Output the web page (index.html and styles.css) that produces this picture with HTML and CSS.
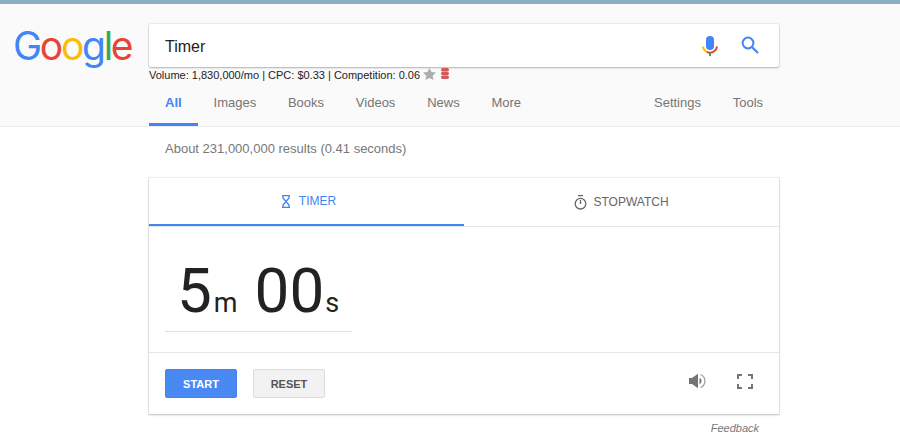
FILE: index.html
```html
<!DOCTYPE html>
<html lang="en">
<head>
<meta charset="utf-8">
<title>Timer - Google Search</title>
<link rel="stylesheet" href="styles.css">
</head>
<body>
<div class="topbar"></div>
<header class="header">
  <div class="logo"><span class="blue">G</span><span class="red">o</span><span class="yellow">o</span><span class="blue">g</span><span class="green">l</span><span class="red">e</span></div>
  <div class="head-main">
    <div class="search">
      <span class="query">Timer</span>
      <svg class="mic" width="16" height="20" viewBox="0 0 16 20">
        <rect x="4" y="0" width="8" height="14" rx="4" fill="#4285f4"/>
        <path d="M1 10.500a7 7 0 0 0 3.800 5.400" fill="none" stroke="#fbbc05" stroke-width="2"/>
        <path d="M4.800 15.900a7 7 0 0 0 6.400 0A7 7 0 0 0 15 10.500" fill="none" stroke="#ea4335" stroke-width="2"/>
        <rect x="7" y="16.500" width="2" height="3.500" fill="#34a853"/>
      </svg>
      <svg class="mag" width="18" height="18" viewBox="0 0 18 18" fill="none" stroke="#4285f4">
        <circle cx="7" cy="7" r="5.400" stroke-width="2"/>
        <path d="M11 11l6 6" stroke-width="2.200"/>
      </svg>
    </div>
    <div class="metrics">
      <span>Volume: 1,830,000/mo | CPC: $0.33 | Competition: 0.06</span>
      <svg class="star" width="13" height="12" viewBox="0 0 13 12"><path d="M6.500 0l2 4 4.500.6-3.300 3.100.8 4.300-4-2.100-4 2.100.8-4.300L0 4.600 4.500 4z" fill="#adadad"/></svg>
      <svg class="db" width="8" height="11" viewBox="0 0 8 11"><g fill="#d25a5a"><rect y="0" width="8" height="3.400" rx="1.700"/><rect y="3.800" width="8" height="3.400" rx="1.700"/><rect y="7.600" width="8" height="3.400" rx="1.700"/></g></svg>
    </div>
    <nav class="nav">
      <a class="tab active">All</a>
      <a class="tab">Images</a>
      <a class="tab">Books</a>
      <a class="tab">Videos</a>
      <a class="tab">News</a>
      <a class="tab">More</a>
      <span class="spacer"></span>
      <a class="tab">Settings</a>
      <a class="tab">Tools</a>
    </nav>
  </div>
</header>
<main class="content">
  <p class="stats">About 231,000,000 results (0.41 seconds)</p>
  <section class="card">
    <div class="tabs">
      <div class="ctab on">
        <svg class="hourglass" width="10" height="13" viewBox="0 0 10 13" fill="none" stroke="#4285f4" stroke-width="1.300"><path d="M1 .7h8M1 12.300h8M2 .7v2.300L8 10v2.300M8 .7v2.300L2 10v2.300"/></svg>
        <span>TIMER</span>
      </div>
      <div class="ctab">
        <svg width="13" height="15" viewBox="0 0 13 15" fill="none" stroke="#666" stroke-width="1.300"><path d="M4 .7h5M6.500 5v4"/><circle cx="6.500" cy="8.700" r="5.300"/></svg>
        <span>STOPWATCH</span>
      </div>
    </div>
    <div class="display">
      <div class="time"><span class="big">5</span><span class="unit minutes">m</span><span class="big second">00</span><span class="unit">s</span></div>
    </div>
    <div class="controls">
      <button class="btn start">START</button>
      <button class="btn reset">RESET</button>
      <span class="spacer"></span>
      <svg class="sound" width="18" height="16" viewBox="0 0 18 16"><path d="M1 5h3L10 .8v14.400L4 11H1z" fill="#757575"/><path d="M11.500 4.800a3.500 3.500 0 0 1 0 6.400z" fill="#757575"/><path d="M12.500 1.500a7 7 0 0 1 0 13" fill="none" stroke="#a0a0a0" stroke-width="1.300"/></svg>
      <svg class="full" width="16" height="15" viewBox="0 0 16 15" fill="none" stroke="#757575" stroke-width="2"><path d="M1 5V1h4M11 1h4v4M15 10v4h-4M5 14H1v-4"/></svg>
    </div>
  </section>
  <div class="feedback">Feedback</div>
</main>
</body>
</html>
```
FILE: styles.css
```css
* { box-sizing: border-box; }
html, body { margin: 0; padding: 0; }
body {
  width: 900px;
  height: 448px;
  overflow: hidden;
  background: #fff;
  font-family: "Liberation Sans", Arial, sans-serif;
  color: #222;
}
.topbar { height: 4px; background: #8bb0c4; }
.header {
  height: 123px;
  background: #fafafa;
  border-bottom: 1px solid #ebebeb;
  display: flex;
}
.logo {
  width: 149px;
  padding: 17px 0 0 13px;
  font-family: Inter, "Liberation Sans", sans-serif;
  font-weight: 400;
  font-size: 39px;
  line-height: 50px;
  letter-spacing: -2.300px;
  white-space: nowrap;
}
.blue { color: #4285f4; }
.red { color: #ea4335; }
.yellow { color: #fbbc05; }
.green { color: #34a853; }
.head-main { width: 630px; display: flex; flex-direction: column; padding-top: 20px; }
.search {
  height: 44px;
  background: #fff;
  border-radius: 2px;
  box-shadow: 0 1px 2px rgba(0,0,0,.25), 0 0 0 1px rgba(0,0,0,.05);
  display: flex;
  align-items: center;
  padding: 0 20px 0 16px;
}
.query { flex: 1; font-size: 16px; color: #222; padding-top: 2px; }
.mic { margin-right: 23px; }
.mag { margin-top: -1px; }
.metrics {
  height: 14px;
  margin-top: 1px;
  display: flex;
  align-items: center;
  font-size: 11px;
  line-height: 14px;
  color: #222;
  white-space: nowrap;
}
.star { margin-left: 3px; margin-top: -3px; }
.db { margin-left: 5px; margin-top: -3px; }
.nav { display: flex; height: 44px; font-size: 13px; }
.tab {
  padding: 13px 15.900px 0;
  color: #757575;
  height: 44px;
  border-bottom: 3px solid transparent;
}
.active { color: #4285f4; font-weight: 700; border-bottom-color: #4285f4; padding: 13px 16px 0; }
.spacer { flex: 1; }
.content { padding-left: 149px; width: 779px; }
.stats { margin: 0; padding: 14px 0 0 16px; height: 51px; font-size: 13px; line-height: 15px; color: #777; }
.card {
  width: 630px;
  height: 236px;
  background: #fff;
  box-shadow: 0 1px 2px rgba(0,0,0,.22), 0 0 0 1px rgba(0,0,0,.05);
  display: flex;
  flex-direction: column;
}
.tabs { display: flex; height: 49px; border-bottom: 1px solid #e4e4e4; }
.ctab {
  flex: 1 1 0;
  height: 48px;
  display: flex;
  align-items: center;
  justify-content: center;
  gap: 6px;
  font-size: 12px;
  color: #666;
}
.ctab.on { color: #4285f4; border-bottom: 2px solid #4285f4; gap: 8px; }
.hourglass { margin-left: 4px; }
.display { height: 126px; padding: 27px 0 0 16px; border-bottom: 1px solid #e6e6e6; }
.time {
  width: 187px;
  height: 78px;
  border-bottom: 1px solid #e0e0e0;
  display: flex;
  align-items: baseline;
  white-space: nowrap;
  font-family: Roboto, "Liberation Sans", sans-serif;
  color: #222;
}
.big { font-size: 62px; line-height: 74px; margin-left: 12px; }
.big.second { margin-left: 17px; }
.unit { font-size: 27px; margin-left: 1px; }
.unit.minutes { margin-left: 2px; }
.controls { flex: 1; display: flex; align-items: center; padding: 0 26px 0 16px; }
.btn {
  width: 72px;
  height: 29px;
  padding: 0;
  border-radius: 2px;
  font-family: "Liberation Sans", Arial, sans-serif;
  font-size: 11px;
  font-weight: 700;
}
.start { background: #4a89f3; border: 1px solid #4282ea; color: #fff; }
.reset { background: #f2f2f2; border: 1px solid #dcdcdc; color: #555; margin-left: 16px; }
.sound { margin: 0 31px 5px 0; }
.full { margin-bottom: 5px; }
.feedback { text-align: right; padding: 8px 20px 0 0; font-size: 11px; font-style: italic; color: #777; }
```
